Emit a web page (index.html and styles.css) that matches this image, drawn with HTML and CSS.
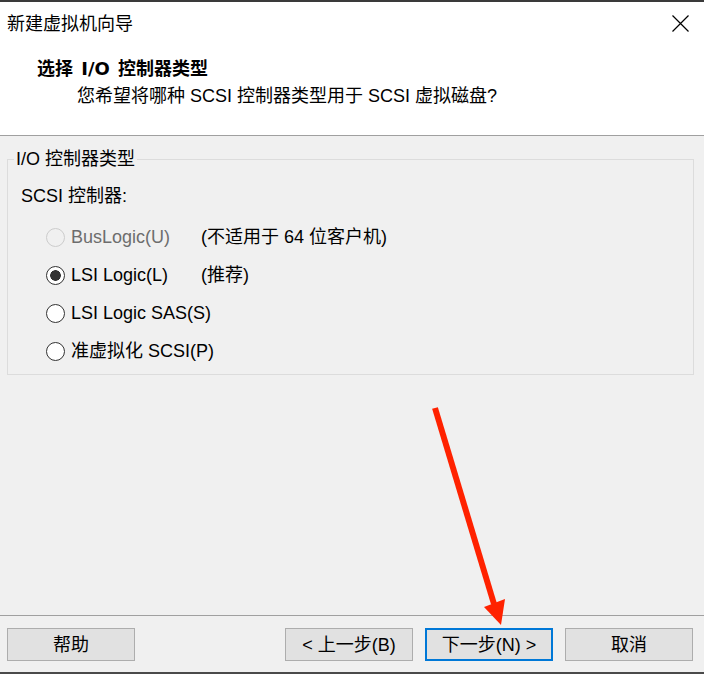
FILE: index.html
```html
<!DOCTYPE html>
<html>
<head>
    <meta charset="utf-8"/>
    <title>新建虚拟机向导</title>
    <link rel="stylesheet" href="styles.css">
</head>
<body>
<div class="wizard">
    <div class="header">
        <div class="titlebar">
            <span class="title">新建虚拟机向导</span>
            <svg class="close" width="17" height="17" viewBox="0 0 17 17">
                <path d="M0.5 0.5 L16.5 16.5 M16.5 0.5 L0.5 16.5" stroke="#000" stroke-width="1.2" fill="none"/>
            </svg>
        </div>
        <div class="heading">选择 I/O 控制器类型</div>
        <div class="subtitle">您希望将哪种 SCSI 控制器类型用于 SCSI 虚拟磁盘?</div>
    </div>

    <div class="main">
        <fieldset class="group">
            <legend>I/O 控制器类型</legend>
            <div class="group_inner">
                <div class="group_label">SCSI 控制器:</div>
                <label class="option disabled">
                    <input type="radio" name="scsi" disabled>
                    <span class="opt_text">BusLogic(U)</span>
                    <span class="note">(不适用于 64 位客户机)</span>
                </label>
                <label class="option">
                    <input type="radio" name="scsi" checked>
                    <span class="opt_text">LSI Logic(L)</span>
                    <span class="note">(推荐)</span>
                </label>
                <label class="option">
                    <input type="radio" name="scsi">
                    <span class="opt_text">LSI Logic SAS(S)</span>
                </label>
                <label class="option">
                    <input type="radio" name="scsi">
                    <span class="opt_text">准虚拟化 SCSI(P)</span>
                </label>
            </div>
        </fieldset>
    </div>

    <div class="footer">
        <button class="btn">帮助</button>
        <div class="spacer"></div>
        <button class="btn">&lt; 上一步(B)</button>
        <button class="btn btn_default">下一步(N) &gt;</button>
        <button class="btn">取消</button>
    </div>

    <!-- red annotation arrow drawn over the dialog -->
    <svg class="arrow" width="704" height="674" viewBox="0 0 704 674">
        <line x1="435" y1="408" x2="494" y2="604" stroke="#ff2200" stroke-width="6"/>
        <polygon points="484,607 505,599 501,625" fill="#ff2200"/>
    </svg>
</div>
</body>
</html>
```

FILE: styles.css
```css
*{ padding:0; margin:0; box-sizing:border-box; }
body{ font-family:"Liberation Sans", "Noto Sans CJK SC", sans-serif; font-size:18px; color:#000; background:#f0f0f0; }

.wizard{ position:relative; width:704px; height:674px; display:flex; flex-direction:column; background:#f0f0f0; border-top:2px solid #3a3a3a; border-bottom:2px solid #4a4a4a; }

.header{ background:#fff; height:134px; border-bottom:1px solid #a0a0a0; }
.titlebar{ height:43px; display:flex; align-items:center; justify-content:space-between; padding:0 15px 0 7px; }
.title{ line-height:24px; }
.close{ display:block; }
.heading{ font-family:"DejaVu Sans", "Noto Sans CJK SC", sans-serif; font-weight:bold; line-height:24px; margin-top:12px; padding-left:37px; word-spacing:2px; }
.subtitle{ line-height:24px; margin-top:3px; padding-left:77px; }

.main{ flex:1; padding:0 10px 0 7px; }
.group{ margin-top:11px; border:1px solid #dcdcdc; padding:0; min-width:0; }
.group legend{ margin-left:6px; padding:0 2px; line-height:24px; }
.group_inner{ padding:13px 0 4px 13px; }
.group_label{ line-height:24px; margin-bottom:10px; }

.option{ display:flex; align-items:center; height:38px; white-space:nowrap; }
.option input{ appearance:none; -webkit-appearance:none; width:19px; height:19px; border:1px solid #333; border-radius:50%; background:#fff; margin:0 6px 0 25px; flex:none; }
.option input:checked{ background:radial-gradient(circle at center, #333 0 5px, #fff 5.6px); }
.option input:disabled{ border-color:#cccccc; background:#f0f0f0; }
.opt_text{ min-width:130px; line-height:24px; }
.option.disabled .opt_text{ color:#6d6d6d; }
.note{ line-height:24px; }

.footer{ height:57px; border-top:1px solid #a0a0a0; display:flex; align-items:flex-start; gap:12px; padding:12px 11px 0 7px; }
.spacer{ flex:1; }
.btn{ width:128px; height:33px; border:1px solid #adadad; background:#e1e1e1; font:inherit; color:#000; line-height:24px; }
.btn_default{ border:2px solid #0078d7; }

.arrow{ position:absolute; left:0; top:-2px; pointer-events:none; }
```
